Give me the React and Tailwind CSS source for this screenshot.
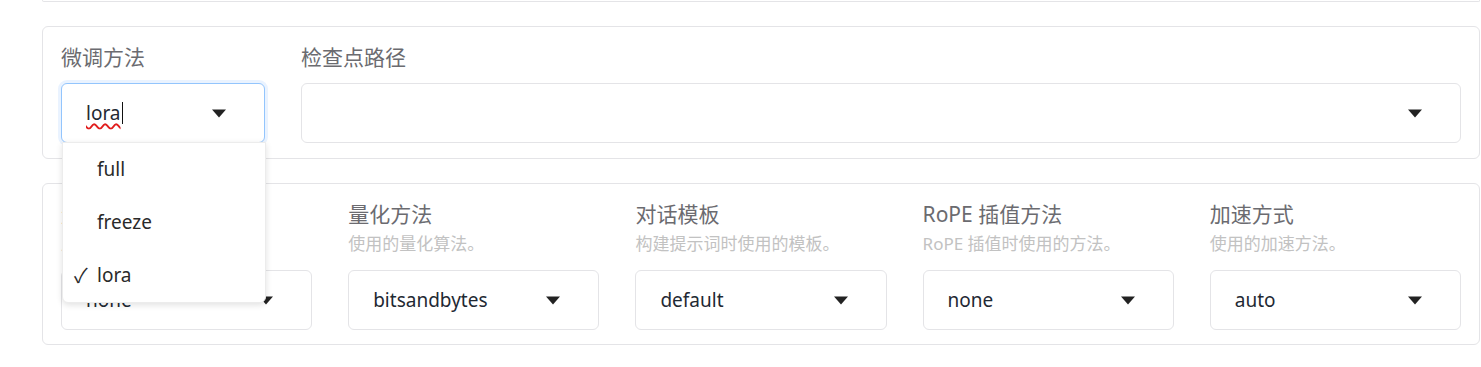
import React from 'react';

const font = { fontFamily: '"Source Sans Pro", "Noto Sans", "Noto Sans CJK SC", sans-serif' };

const Arrow = () => (
  <svg width="16" height="9" viewBox="0 0 16 9" className="shrink-0">
    <path d="M1 0.5 L15 0.5 L8 8.5 Z" fill="#222" />
  </svg>
);

const SelectBox = ({ value }) => (
  <div className="flex h-[60px] items-center justify-between rounded-[6px] border border-[#e4e4e7] bg-white pl-[24px] pr-[37px]">
    <span className="text-[19px] leading-none text-[#1f2933]">{value}</span>
    <Arrow />
  </div>
);

const Field = ({ label, desc, value }) => (
  <div className="flex flex-col">
    <div className="text-[21px] leading-[28px] text-[#6b6b70]">{label}</div>
    <div className="mt-[4px] text-[17px] leading-[24px] text-[#c2c2c2]">{desc}</div>
    <div className="mt-[14px]">
      <SelectBox value={value} />
    </div>
  </div>
);

const Menu = () => {
  const items = ['full', 'freeze', 'lora'];
  return (
    <div className="absolute left-[1px] top-[59px] z-10 w-[204px] rounded-b-[6px] border border-[#ececec] bg-white shadow-[0_2px_6px_rgba(0,0,0,0.12)]">
      {items.map((it) => (
        <div key={it} className="relative flex h-[53px] items-center pl-[34px] text-[19px] text-[#2a2a2a]">
          {it === 'lora' && <span className="absolute left-[11px] text-[20px]">✓</span>}
          {it}
        </div>
      ))}
    </div>
  );
};

export default function App() {
  return (
    <div className="h-[367px] w-full overflow-hidden bg-white pl-[42px] pr-[1px]" style={font}>
      {/* end of the block above */}
      <div className="h-[2px] rounded-b-[6px] border-x border-b border-[#e4e4e7]" />

      {/* finetuning method + checkpoint */}
      <div className="mt-[24px] flex gap-[36px] rounded-[6px] border border-[#e4e4e7] px-[18px] pb-[15px] pt-[16px]">
        <div className="w-[204px] shrink-0">
          <div className="text-[21px] leading-[28px] text-[#6b6b70]">微调方法</div>
          <div className="relative mt-[12px]">
            <div className="flex h-[60px] items-center justify-between rounded-[6px] border border-[#93c5fd] bg-white pl-[24px] pr-[37px] shadow-[0_0_0_3px_#eaf3ff]">
              <span className="flex items-center text-[19px] leading-none text-[#1f2933]">
                <span className="underline decoration-[#e11d1d] decoration-wavy decoration-[1.5px] underline-offset-[3px]">lora</span>
                <span className="ml-[1px] inline-block h-[22px] w-[1px] bg-[#111]" />
              </span>
              <Arrow />
            </div>
            <Menu />
          </div>
        </div>
        <div className="flex-1">
          <div className="text-[21px] leading-[28px] text-[#6b6b70]">检查点路径</div>
          <div className="mt-[12px]">
            <SelectBox value="" />
          </div>
        </div>
      </div>

      {/* advanced options */}
      <div className="mt-[24px] grid grid-cols-5 gap-[36px] rounded-[6px] border border-[#e4e4e7] px-[18px] pb-[14px] pt-[16px]">
        <Field label="量化等级" desc="启用 4/8 比特模型量化。" value="none" />
        <Field label="量化方法" desc="使用的量化算法。" value="bitsandbytes" />
        <Field label="对话模板" desc="构建提示词时使用的模板。" value="default" />
        <Field label="RoPE 插值方法" desc="RoPE 插值时使用的方法。" value="none" />
        <Field label="加速方式" desc="使用的加速方法。" value="auto" />
      </div>
    </div>
  );
}
